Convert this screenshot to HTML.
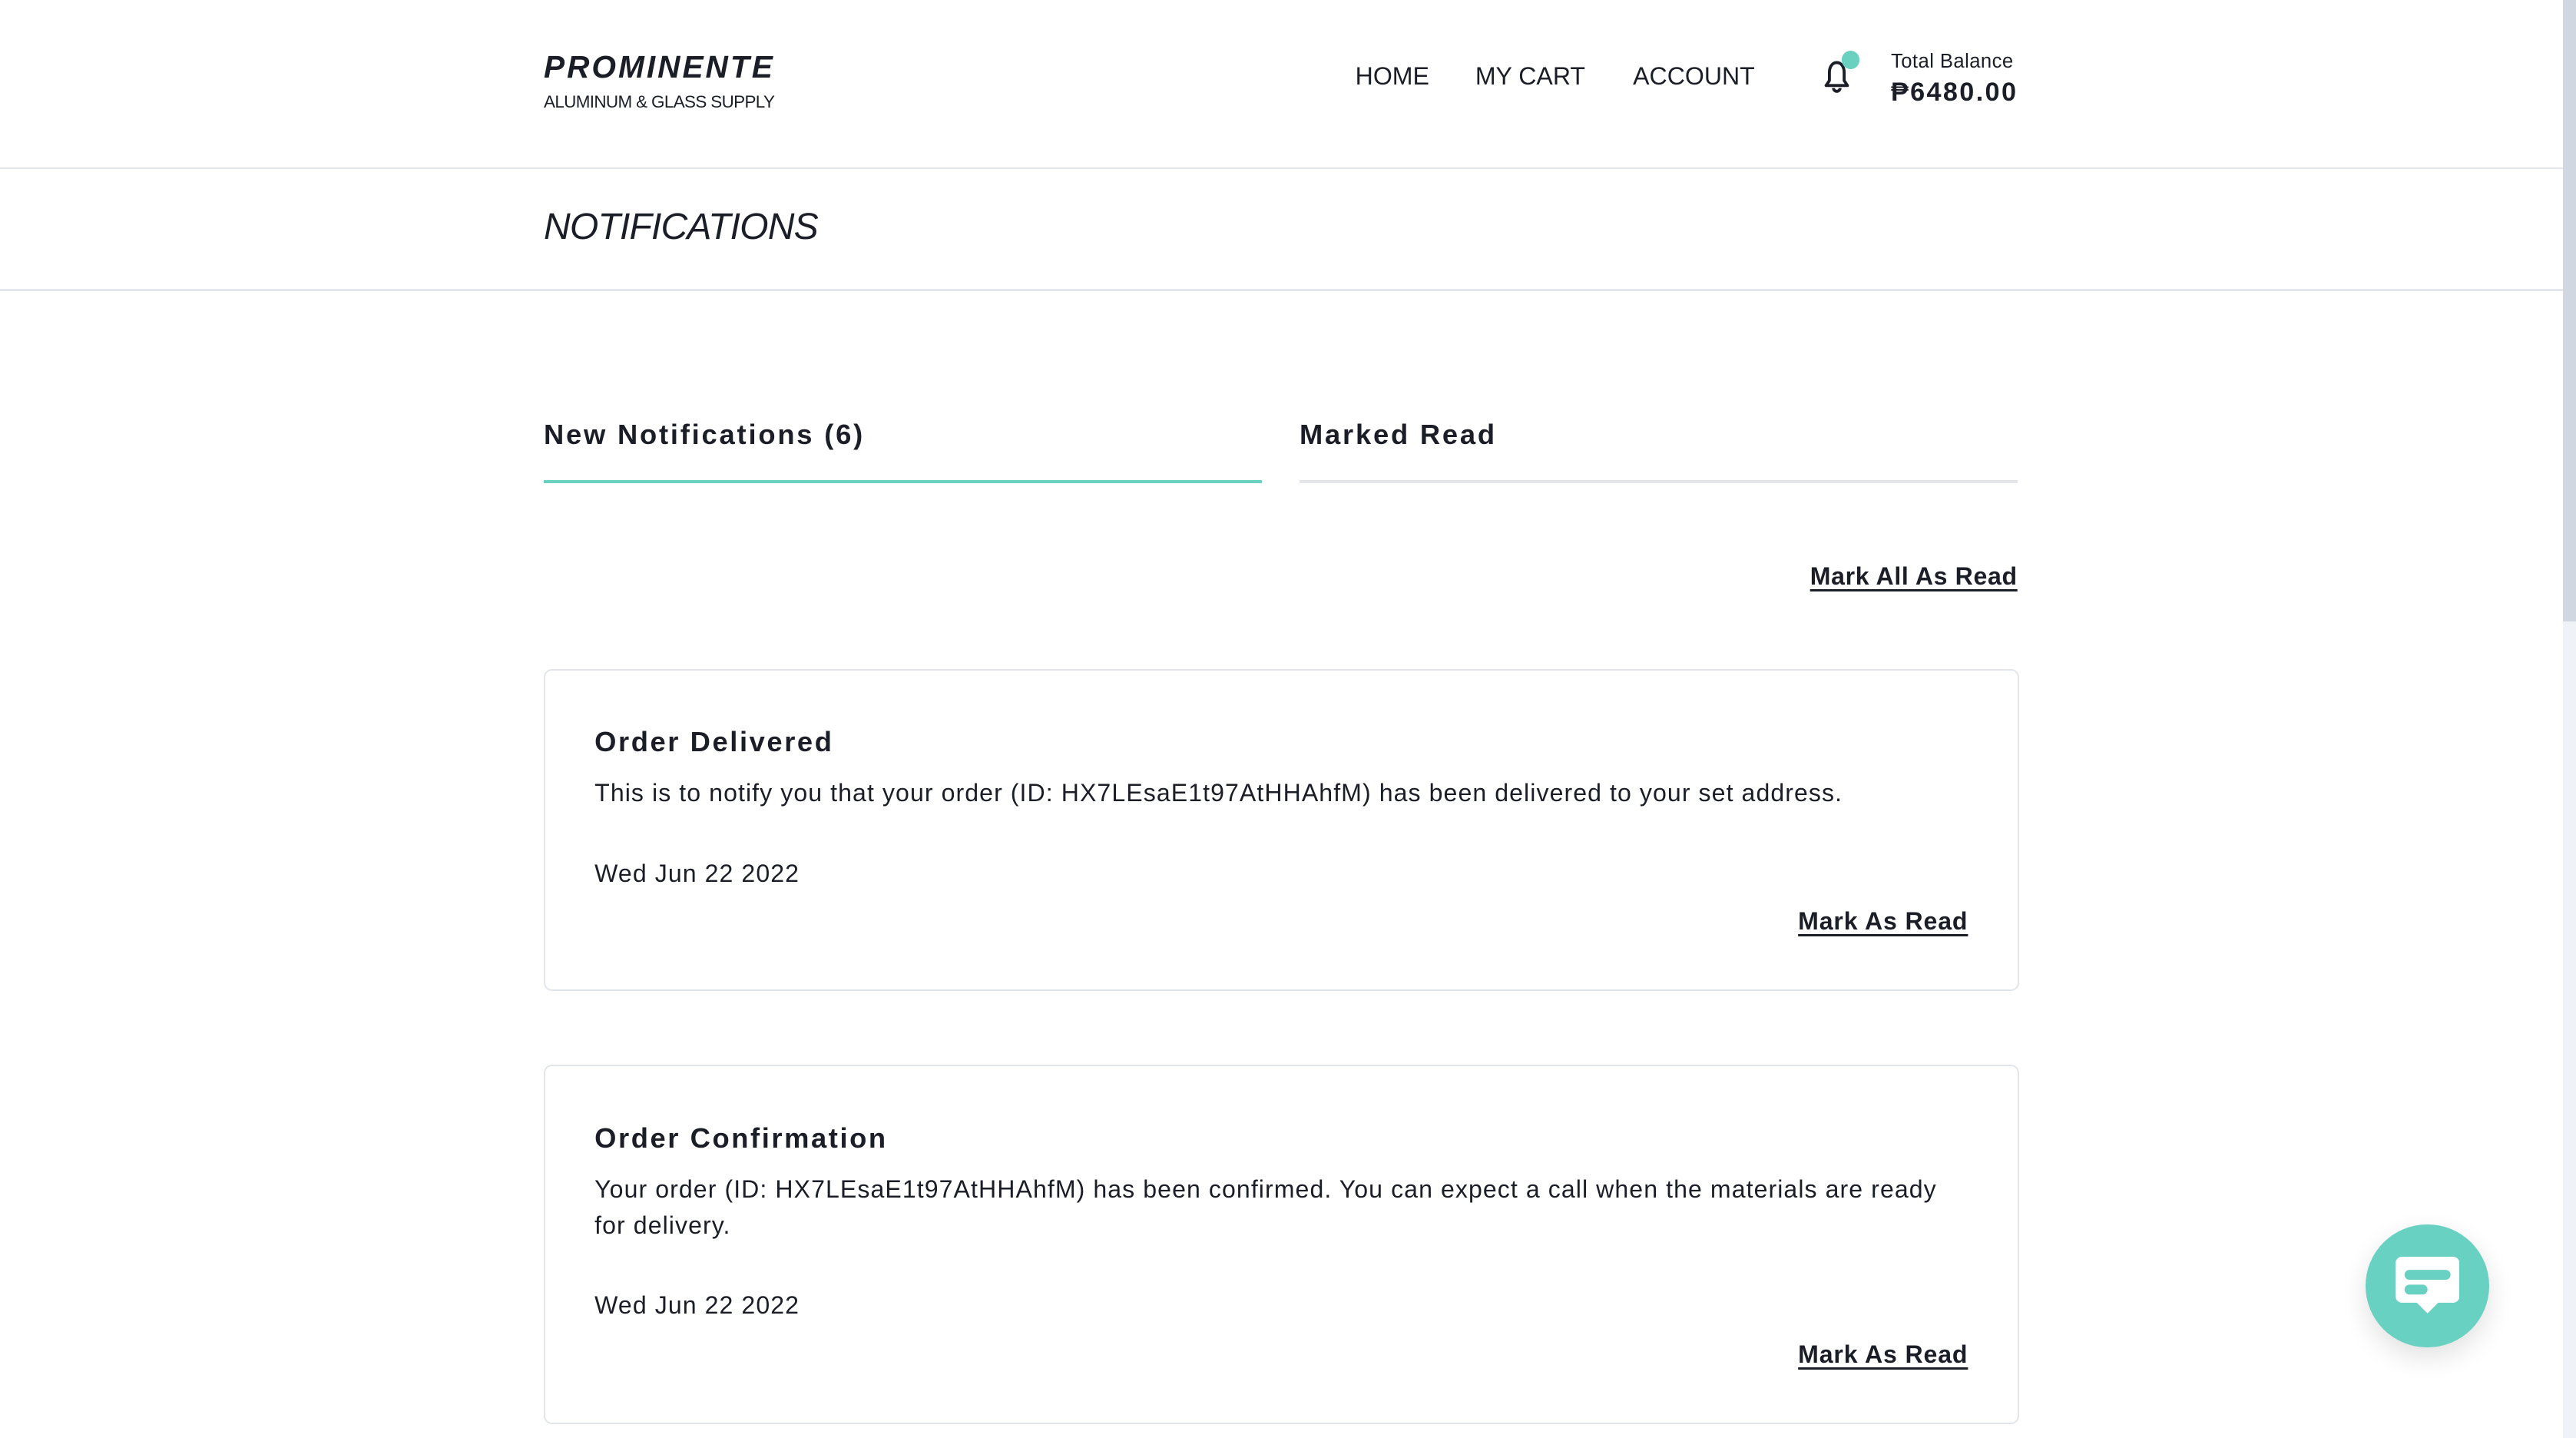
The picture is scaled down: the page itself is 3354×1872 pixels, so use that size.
<!DOCTYPE html>
<html><head><meta charset="utf-8"><style>
html,body{margin:0;padding:0;width:3354px;height:1872px;overflow:hidden;background:#fff}
#w{zoom:2.139;width:1568px;height:875px;position:relative;font-family:"Liberation Sans",sans-serif;color:#1b1e27}
.a{position:absolute;white-space:nowrap}
.hr{position:absolute;left:0;width:1560px;height:1px;background:#e3e7ec}
.card{position:absolute;left:331px;width:896px;border:1px solid #e2e5ea;border-radius:5px;background:#fff}
u{text-decoration-thickness:1.5px;text-underline-offset:3px}
.b{font-size:15px;letter-spacing:0.5px}
</style></head><body><div id="w">
<div class="a" style="left:331px;top:30px;font-size:19px;font-weight:bold;font-style:italic;letter-spacing:1.4px">PROMINENTE</div>
<div class="a" style="left:331px;top:56px;font-size:10.5px;letter-spacing:-0.3px">ALUMINUM &amp; GLASS SUPPLY</div>
<div class="a" style="left:825px;top:38px;font-size:15px">HOME</div>
<div class="a" style="left:898px;top:38px;font-size:15px">MY CART</div>
<div class="a" style="left:994px;top:38px;font-size:15px">ACCOUNT</div>
<svg class="a" style="left:1107px;top:35px" width="22" height="24" viewBox="0 0 22 24"><path d="M11 3c-3 0-4.5 3-4.5 6v5l-2 3h13l-2-3V9c0-3-1.5-6-4.5-6z" fill="none" stroke="#1b1e27" stroke-width="1.8" stroke-linejoin="round"/><path d="M9 18.5a2 2 0 0 0 4 0" fill="none" stroke="#1b1e27" stroke-width="1.8"/></svg>
<div class="a" style="left:1121px;top:31px;width:11px;height:11px;border-radius:50%;background:#6ad1c1"></div>
<div class="a" style="left:1151px;top:31px;font-size:12px;letter-spacing:0.2px">Total Balance</div>
<div class="a" style="left:1151px;top:47px;font-size:16px;font-weight:bold;letter-spacing:1.1px">₱6480.00</div>
<div class="hr" style="top:102px"></div>
<div class="a" style="left:331px;top:125px;font-size:22.5px;font-style:italic;font-weight:500;letter-spacing:-0.4px">NOTIFICATIONS</div>
<div class="hr" style="top:176px"></div>
<div class="a" style="left:331px;top:255px;font-size:17px;font-weight:bold;letter-spacing:1.3px">New Notifications (6)</div>
<div class="a" style="left:791px;top:255px;font-size:17px;font-weight:bold;letter-spacing:1.3px">Marked Read</div>
<div class="a" style="left:331px;top:292px;width:437px;height:2px;background:#6ad1c1"></div>
<div class="a" style="left:791px;top:292px;width:437px;height:2px;background:#e3e5e8"></div>
<div class="a" style="right:340px;top:342px;font-size:15px;font-weight:bold;letter-spacing:0.3px"><u>Mark All As Read</u></div>
<div class="card" style="top:407px;height:194px">
<div class="a" style="left:30px;top:34px;font-size:17px;font-weight:bold;letter-spacing:1.2px">Order Delivered</div>
<div class="a b" style="left:30px;top:66px">This is to notify you that your order (ID: HX7LEsaE1t97AtHHAhfM) has been delivered to your set address.</div>
<div class="a b" style="left:30px;top:115px">Wed Jun 22 2022</div>
<div class="a" style="right:30px;top:144px;font-size:15px;font-weight:bold;letter-spacing:0.4px"><u>Mark As Read</u></div>
</div>
<div class="card" style="top:648px;height:217px">
<div class="a" style="left:30px;top:34px;font-size:17px;font-weight:bold;letter-spacing:1.2px">Order Confirmation</div>
<div class="a b" style="left:30px;top:64px;white-space:normal;width:825px;line-height:22px">Your order (ID: HX7LEsaE1t97AtHHAhfM) has been confirmed. You can expect a call when the materials are ready for delivery.</div>
<div class="a b" style="left:30px;top:137px">Wed Jun 22 2022</div>
<div class="a" style="right:30px;top:167px;font-size:15px;font-weight:bold;letter-spacing:0.4px"><u>Mark As Read</u></div>
</div>
<div class="a" style="left:1440px;top:745px;width:75px;height:75px;border-radius:50%;background:#69d1c1;box-shadow:0 6px 16px rgba(0,0,0,0.12)">
<svg style="position:absolute;left:18px;top:20px" width="39" height="36" viewBox="0 0 39 36"><path d="M4 0h31a4 4 0 0 1 4 4v20a4 4 0 0 1-4 4H26l-6.5 6.5L13 28H4a4 4 0 0 1-4-4V4a4 4 0 0 1 4-4z" fill="#fff"/><rect x="5.5" y="8" width="28" height="6" rx="3" fill="#69d1c1"/><rect x="5.5" y="17" width="14" height="6" rx="3" fill="#69d1c1"/></svg>
</div>
<div class="a" style="left:1560px;top:0;width:8px;height:875px;background:#eff3f8"></div>
<div class="a" style="left:1560px;top:0;width:8px;height:378px;background:#d0d7e1"></div>
</div></body></html>
